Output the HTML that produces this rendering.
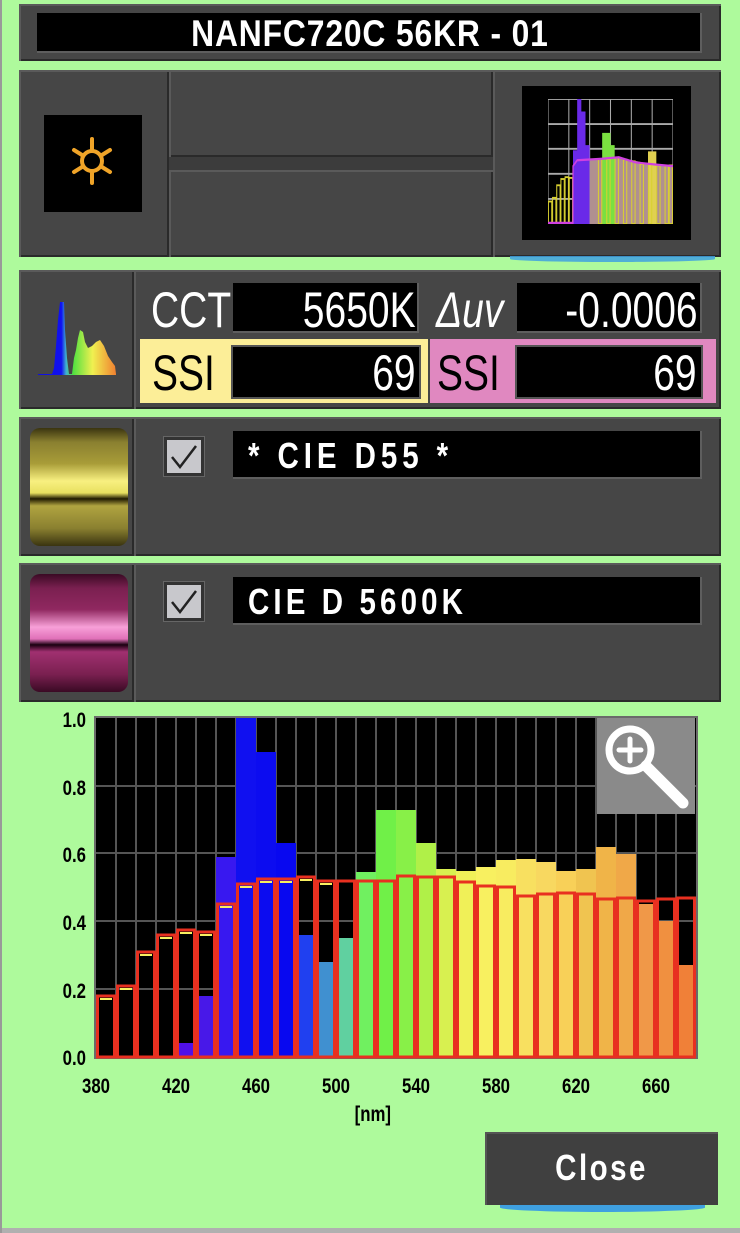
<!DOCTYPE html>
<html><head><meta charset="utf-8"><style>
*{margin:0;padding:0;box-sizing:border-box}
body{width:740px;height:1233px;background:#aefa9c;position:relative;overflow:hidden;font-family:"Liberation Sans",sans-serif}
.a{position:absolute}
.pan{position:absolute;background:#464646;box-shadow:inset 2px 2px 0 #5a5a5a,inset -2px -2px 0 #2a2a2a}
.blk{position:absolute;background:#000;box-shadow:inset -2px -2px 0 #5e5e5e}
.t{position:absolute;color:#fff;white-space:nowrap;line-height:1}
.t span{display:inline-block}
.l span{transform-origin:left center}
.r span{transform-origin:right center}
.c span{transform-origin:center center}
.big span{transform:scaleX(.78)}
.chk{position:absolute;width:40px;height:39px;background:#c8c8cc;border:3px solid #333;box-shadow:0 0 0 1px #666}
</style></head><body>
<div class="a" style="left:0;top:1228px;width:740px;height:5px;background:#b0b0b0"></div>
<div class="a" style="left:0;top:0;width:2px;height:1233px;background:#999"></div>

<div class="pan" style="left:19px;top:4px;width:702px;height:57px"></div>
<div class="blk" style="left:37px;top:13px;width:665px;height:40px"></div>
<div class="t c" style="left:37px;width:665px;text-align:center;top:15px;font-size:37px;font-weight:bold"><span style="transform:scaleX(.86);letter-spacing:1px">NANFC720C 56KR - 01</span></div>

<div class="pan" style="left:19px;top:70px;width:150px;height:187px"></div>
<div class="pan" style="left:169px;top:70px;width:324px;height:87px"></div>
<div class="pan" style="left:169px;top:170px;width:324px;height:87px"></div>
<div class="a" style="left:169px;top:157px;width:324px;height:13px;background:#3c3c3c"></div>
<div class="pan" style="left:493px;top:70px;width:228px;height:187px"></div>
<div class="a" style="left:510px;top:256px;width:205px;height:6px;border-radius:0 0 50% 50%;background:#3fa0e0;opacity:.85"></div>
<div class="a" style="left:44px;top:115px;width:98px;height:97px;background:#000"></div>
<svg class="a" style="left:62px;top:131px" width="60" height="60" viewBox="0 0 60 60"><g stroke="#f0a428" stroke-width="4" fill="none" stroke-linecap="round"><circle cx="30" cy="30" r="10"/><line x1="30" y1="8" x2="30" y2="18"/><line x1="30" y1="42" x2="30" y2="52"/><line x1="12" y1="19" x2="20" y2="24"/><line x1="40" y1="36" x2="48" y2="41"/><line x1="12" y1="41" x2="20" y2="36"/><line x1="40" y1="24" x2="48" y2="19"/></g></svg>
<div class="a" style="left:522px;top:86px;width:169px;height:154px;background:#000"></div>
<svg class="a" style="left:548px;top:99px" width="125" height="125" viewBox="96 718 600 339" preserveAspectRatio="none">
<g stroke="#aaa" stroke-width="5"><rect x="96" y="718" width="600" height="339" fill="none"/>
<line x1="96" y1="786" x2="696" y2="786"/><line x1="96" y1="853" x2="696" y2="853"/><line x1="96" y1="921" x2="696" y2="921"/><line x1="96" y1="989" x2="696" y2="989"/>
<line x1="196" y1="718" x2="196" y2="1057"/><line x1="296" y1="718" x2="296" y2="1057"/><line x1="396" y1="718" x2="396" y2="1057"/><line x1="496" y1="718" x2="496" y2="1057"/><line x1="596" y1="718" x2="596" y2="1057"/></g>
<polygon fill="#6a2ae8" points="216,1057 216,857 236,857 236,718 256,718 256,752 276,752 276,843 296,843 296,1057"/>
<polygon fill="#b09090" points="296,1057 296,880 436,876 576,893 696,900 696,1057"/>
<polygon fill="#7ae040" points="356,1057 356,810 396,810 396,843 416,843 416,1057"/>
<polygon fill="#e0d050" points="576,1057 576,860 616,860 616,1057"/>
<g fill="none" stroke="#d8d030" stroke-width="5"><rect x="98" y="996" width="16" height="61"/><rect x="118" y="986" width="16" height="71"/><rect x="138" y="952" width="16" height="105"/><rect x="158" y="935" width="16" height="122"/><rect x="178" y="930" width="16" height="127"/><rect x="198" y="932" width="16" height="125"/><rect x="338" y="881" width="16" height="176"/><rect x="378" y="881" width="16" height="176"/><rect x="418" y="877" width="16" height="180"/><rect x="458" y="882" width="16" height="175"/><rect x="498" y="887" width="16" height="170"/><rect x="538" y="894" width="16" height="163"/><rect x="578" y="894" width="16" height="163"/><rect x="618" y="898" width="16" height="159"/><rect x="658" y="899" width="16" height="158"/><rect x="678" y="898" width="16" height="159"/></g>
<polyline fill="none" stroke="#d040e0" stroke-width="6" points="96,1054 216,1054 216,900 236,884 356,880 436,876 516,890 616,896 696,900"/>
</svg>

<div class="pan" style="left:19px;top:270px;width:115px;height:139px"></div>
<div class="pan" style="left:134px;top:270px;width:587px;height:139px"></div>
<svg class="a" style="left:36px;top:300px" width="82" height="78" viewBox="0 0 82 78"><defs><linearGradient id="sg" x1="0" x2="1"><stop offset="0" stop-color="#1010e0"/><stop offset=".3" stop-color="#1010f0"/><stop offset=".36" stop-color="#40b0d0"/><stop offset=".45" stop-color="#50e040"/><stop offset=".7" stop-color="#f0f050"/><stop offset="1" stop-color="#f08030"/></linearGradient></defs>
<polygon fill="url(#sg)" points="2,74 16,74 18,68 20,46 22,20 24,2 28,2 29,30 31,58 33,74 36,74 38,58 40,50 42,38 44,30 47,32 49,42 52,48 56,46 60,42 64,40 68,46 72,56 76,62 79,66 80,74 80,75 2,75"/></svg>
<div class="t l big" style="left:151px;top:285px;font-size:50px"><span>CCT</span></div>
<div class="blk" style="left:233px;top:283px;width:186px;height:50px"></div>
<div class="t r big" style="left:233px;width:183px;text-align:right;top:285px;font-size:50px"><span>5650K</span></div>
<div class="t l big" style="left:436px;top:285px;font-size:50px;font-style:italic"><span>Δuv</span></div>
<div class="blk" style="left:517px;top:283px;width:185px;height:50px"></div>
<div class="t r big" style="left:517px;width:181px;text-align:right;top:285px;font-size:50px"><span>-0.0006</span></div>
<div class="a" style="left:140px;top:339px;width:288px;height:64px;background:#fcee98"></div>
<div class="t l big" style="left:152px;top:348px;font-size:50px;color:#000"><span>SSI</span></div>
<div class="blk" style="left:231px;top:345px;width:190px;height:54px;box-shadow:inset 0 0 0 2px #555"></div>
<div class="t r big" style="left:231px;width:185px;text-align:right;top:348px;font-size:50px"><span>69</span></div>
<div class="a" style="left:430px;top:339px;width:286px;height:64px;background:#e088c0"></div>
<div class="t l big" style="left:437px;top:348px;font-size:50px;color:#000"><span>SSI</span></div>
<div class="blk" style="left:515px;top:345px;width:188px;height:54px;box-shadow:inset 0 0 0 2px #555"></div>
<div class="t r big" style="left:515px;width:182px;text-align:right;top:348px;font-size:50px"><span>69</span></div>

<div class="pan" style="left:19px;top:417px;width:115px;height:139px"></div>
<div class="pan" style="left:134px;top:417px;width:587px;height:139px"></div>
<div class="a" style="left:30px;top:428px;width:98px;height:118px;border-radius:10px;background:linear-gradient(#3a3410,#8a8030 12%,#a89c38 30%,#f8f080 45%,#e8e060 55%,#201a00 60%,#b0a440 66%,#8a8030 85%,#3a3410)"></div>
<div class="chk" style="left:164px;top:437px"></div>
<svg class="a" style="left:167px;top:440px" width="34" height="33"><polyline points="5,17 13,27 29,6" fill="none" stroke="#222" stroke-width="2.5"/></svg>
<div class="blk" style="left:233px;top:431px;width:469px;height:48px"></div>
<div class="t l" style="left:248px;top:438px;font-size:36px;font-weight:bold"><span style="transform:scaleX(.82);letter-spacing:6px">* CIE D55 *</span></div>

<div class="pan" style="left:19px;top:563px;width:115px;height:139px"></div>
<div class="pan" style="left:134px;top:563px;width:587px;height:139px"></div>
<div class="a" style="left:30px;top:574px;width:98px;height:118px;border-radius:10px;background:linear-gradient(#3a0a24,#7a2050 12%,#902860 30%,#f8a0d8 45%,#e070b8 55%,#1a0010 60%,#a03070 66%,#7a2050 85%,#3a0a24)"></div>
<div class="chk" style="left:164px;top:582px"></div>
<svg class="a" style="left:167px;top:585px" width="34" height="33"><polyline points="5,17 13,27 29,6" fill="none" stroke="#222" stroke-width="2.5"/></svg>
<div class="blk" style="left:233px;top:577px;width:469px;height:48px"></div>
<div class="t l" style="left:248px;top:584px;font-size:36px;font-weight:bold"><span style="transform:scaleX(.82);letter-spacing:5px">CIE D 5600K</span></div>

<svg class="a" style="left:0;top:0" width="740" height="1233">
<rect x="94" y="716" width="604" height="343" fill="#6a6a6a"/>
<rect x="96" y="718" width="600" height="339" fill="#000"/>
<g stroke="#555" stroke-width="2">
<line x1="96" y1="786" x2="696" y2="786"/><line x1="96" y1="853" x2="696" y2="853"/><line x1="96" y1="921" x2="696" y2="921"/><line x1="96" y1="989" x2="696" y2="989"/>
<line x1="116" y1="718" x2="116" y2="1057"/><line x1="136" y1="718" x2="136" y2="1057"/><line x1="156" y1="718" x2="156" y2="1057"/><line x1="176" y1="718" x2="176" y2="1057"/><line x1="196" y1="718" x2="196" y2="1057"/><line x1="216" y1="718" x2="216" y2="1057"/><line x1="236" y1="718" x2="236" y2="1057"/><line x1="256" y1="718" x2="256" y2="1057"/><line x1="276" y1="718" x2="276" y2="1057"/><line x1="296" y1="718" x2="296" y2="1057"/><line x1="316" y1="718" x2="316" y2="1057"/><line x1="336" y1="718" x2="336" y2="1057"/><line x1="356" y1="718" x2="356" y2="1057"/><line x1="376" y1="718" x2="376" y2="1057"/><line x1="396" y1="718" x2="396" y2="1057"/><line x1="416" y1="718" x2="416" y2="1057"/><line x1="436" y1="718" x2="436" y2="1057"/><line x1="456" y1="718" x2="456" y2="1057"/><line x1="476" y1="718" x2="476" y2="1057"/><line x1="496" y1="718" x2="496" y2="1057"/><line x1="516" y1="718" x2="516" y2="1057"/><line x1="536" y1="718" x2="536" y2="1057"/><line x1="556" y1="718" x2="556" y2="1057"/><line x1="576" y1="718" x2="576" y2="1057"/><line x1="596" y1="718" x2="596" y2="1057"/><line x1="616" y1="718" x2="616" y2="1057"/><line x1="636" y1="718" x2="636" y2="1057"/><line x1="656" y1="718" x2="656" y2="1057"/><line x1="676" y1="718" x2="676" y2="1057"/>
</g>
<rect x="176" y="1043" width="20" height="14" fill="#5010e8"/>
<rect x="196" y="996" width="20" height="61" fill="#4818e8"/>
<rect x="216" y="857" width="20" height="200" fill="#3818f0"/>
<rect x="236" y="718" width="20" height="339" fill="#1010f0"/>
<rect x="256" y="752" width="20" height="305" fill="#0c0cf0"/>
<rect x="276" y="843" width="20" height="214" fill="#0808f0"/>
<rect x="296" y="935" width="20" height="122" fill="#2040f0"/>
<rect x="316" y="962" width="20" height="95" fill="#4090d0"/>
<rect x="336" y="938" width="20" height="119" fill="#60d0a0"/>
<rect x="356" y="872" width="20" height="185" fill="#70f060"/>
<rect x="376" y="810" width="20" height="247" fill="#70f048"/>
<rect x="396" y="810" width="20" height="247" fill="#88f048"/>
<rect x="416" y="843" width="20" height="214" fill="#b0f048"/>
<rect x="436" y="869" width="20" height="188" fill="#d8f050"/>
<rect x="456" y="871" width="20" height="186" fill="#f0f058"/>
<rect x="476" y="867" width="20" height="190" fill="#f8f060"/>
<rect x="496" y="860" width="20" height="197" fill="#f8ec60"/>
<rect x="516" y="859" width="20" height="198" fill="#f8e060"/>
<rect x="536" y="862" width="20" height="195" fill="#f8d860"/>
<rect x="556" y="871" width="20" height="186" fill="#f8d058"/>
<rect x="576" y="869" width="20" height="188" fill="#f0c450"/>
<rect x="596" y="847" width="20" height="210" fill="#f0b448"/>
<rect x="616" y="854" width="20" height="203" fill="#f0a848"/>
<rect x="636" y="904" width="20" height="153" fill="#f09848"/>
<rect x="656" y="921" width="20" height="136" fill="#f09040"/>
<rect x="676" y="965" width="20" height="92" fill="#f08038"/>
<g fill="none" stroke="#e83020" stroke-width="3">
<rect x="97.5" y="996" width="17" height="61"/><rect x="117.5" y="986" width="17" height="71"/><rect x="137.5" y="952" width="17" height="105"/><rect x="157.5" y="935" width="17" height="122"/><rect x="177.5" y="930" width="17" height="127"/><rect x="197.5" y="932" width="17" height="125"/><rect x="217.5" y="904" width="17" height="153"/><rect x="237.5" y="884" width="17" height="173"/><rect x="257.5" y="879" width="17" height="178"/><rect x="277.5" y="879" width="17" height="178"/><rect x="297.5" y="877" width="17" height="180"/><rect x="317.5" y="881" width="17" height="176"/><rect x="337.5" y="881" width="17" height="176"/><rect x="357.5" y="881" width="17" height="176"/><rect x="377.5" y="881" width="17" height="176"/><rect x="397.5" y="876" width="17" height="181"/><rect x="417.5" y="877" width="17" height="180"/><rect x="437.5" y="877" width="17" height="180"/><rect x="457.5" y="882" width="17" height="175"/><rect x="477.5" y="886" width="17" height="171"/><rect x="497.5" y="887" width="17" height="170"/><rect x="517.5" y="896" width="17" height="161"/><rect x="537.5" y="894" width="17" height="163"/><rect x="557.5" y="893" width="17" height="164"/><rect x="577.5" y="894" width="17" height="163"/><rect x="597.5" y="899" width="17" height="158"/><rect x="617.5" y="898" width="17" height="159"/><rect x="637.5" y="901" width="17" height="156"/><rect x="657.5" y="899" width="17" height="158"/><rect x="677.5" y="898" width="17" height="159"/>
</g>
<g stroke="#f8f060" stroke-width="2">
<line x1="100" y1="999" x2="112" y2="999"/><line x1="120" y1="989" x2="132" y2="989"/><line x1="140" y1="955" x2="152" y2="955"/><line x1="160" y1="938" x2="172" y2="938"/><line x1="180" y1="933" x2="192" y2="933"/><line x1="200" y1="935" x2="212" y2="935"/><line x1="220" y1="907" x2="232" y2="907"/><line x1="240" y1="887" x2="252" y2="887"/><line x1="260" y1="882" x2="272" y2="882"/><line x1="280" y1="882" x2="292" y2="882"/><line x1="300" y1="880" x2="312" y2="880"/><line x1="320" y1="884" x2="332" y2="884"/>
</g>
<rect x="597" y="718" width="98" height="96" fill="#8a8a8a"/>
<g stroke="#fff" fill="none" stroke-linecap="round"><circle cx="630" cy="750" r="21" stroke-width="7"/><line x1="646" y1="766" x2="683" y2="803" stroke-width="11"/><line x1="619" y1="750" x2="641" y2="750" stroke-width="5"/><line x1="630" y1="739" x2="630" y2="761" stroke-width="5"/></g>
<g font-family="Liberation Sans, sans-serif" font-size="21" font-weight="bold" fill="#000">
<g transform="translate(86,0) scale(.8,1)">
<text x="0" y="727" text-anchor="end">1.0</text><text x="0" y="795" text-anchor="end">0.8</text><text x="0" y="862" text-anchor="end">0.6</text><text x="0" y="930" text-anchor="end">0.4</text><text x="0" y="998" text-anchor="end">0.2</text><text x="0" y="1065" text-anchor="end">0.0</text>
</g>
<g transform="scale(.8,1)">
<text x="120" y="1093" text-anchor="middle">380</text><text x="220" y="1093" text-anchor="middle">420</text><text x="320" y="1093" text-anchor="middle">460</text><text x="420" y="1093" text-anchor="middle">500</text><text x="520" y="1093" text-anchor="middle">540</text><text x="620" y="1093" text-anchor="middle">580</text><text x="720" y="1093" text-anchor="middle">620</text><text x="820" y="1093" text-anchor="middle">660</text>
<text x="466" y="1121" text-anchor="middle">[nm]</text>
</g>
</g>
</svg>

<div class="a" style="left:500px;top:1203px;width:205px;height:9px;border-radius:0 0 50% 50%;background:#3fa0e0"></div>
<div class="a" style="left:485px;top:1132px;width:233px;height:73px;background:#404040;box-shadow:inset 2px 2px 0 #555"></div>
<div class="t c" style="left:485px;width:233px;text-align:center;top:1150px;font-size:36px;font-weight:bold"><span style="transform:scaleX(.82);letter-spacing:3px">Close</span></div>
</body></html>
